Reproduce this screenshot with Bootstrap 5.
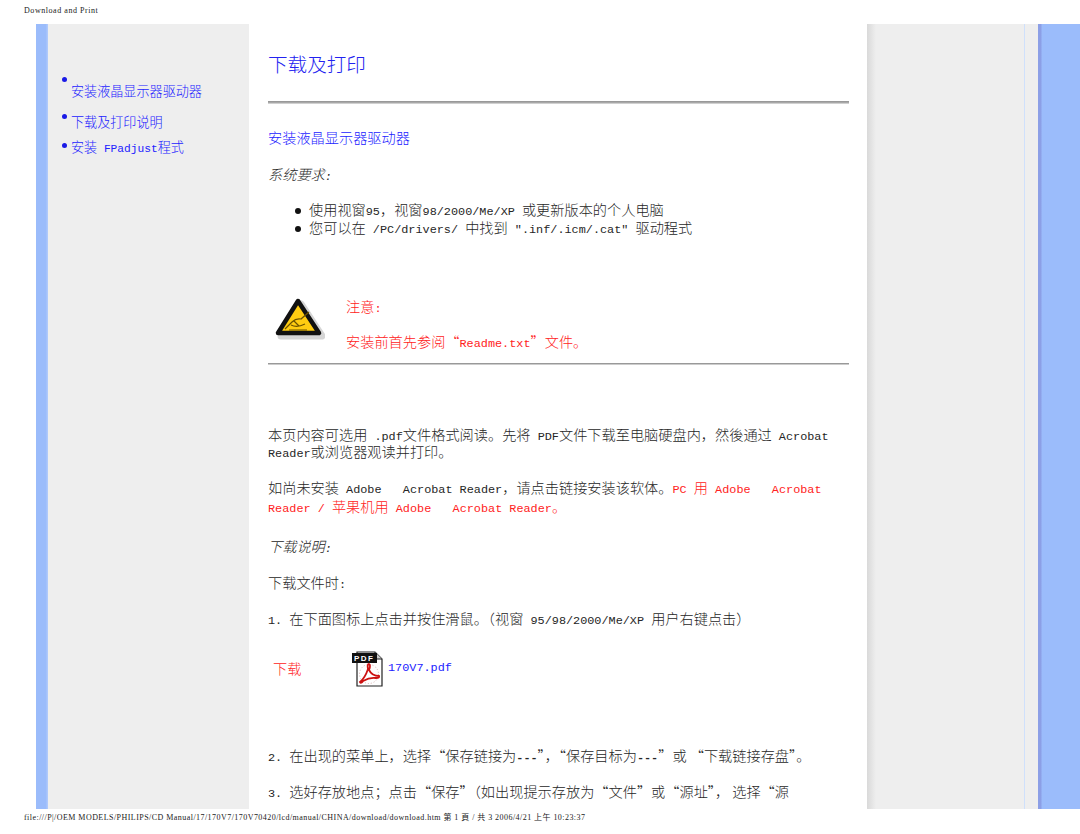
<!DOCTYPE html>
<html lang="zh-CN">
<head>
  <meta charset="UTF-8" />
  <title>Download and Print</title>
  <link href="https://cdn.jsdelivr.net/npm/bootstrap@5.3.3/dist/css/bootstrap.min.css" rel="stylesheet">
  <style>
    html, body { height: 834px; overflow: hidden; }
    body { margin: 0; background: #fff; color: #262626; font-family: "Noto Sans CJK SC", "Liberation Mono", monospace; font-size: 14.2px; line-height: 19px; font-weight: 300; }
    a { text-decoration: none; color: #2222ff; }
    .la { font-family: "Liberation Mono", monospace; font-size: 11.83px; line-height: 1; font-weight: 400; }
    .page-head { height: 24px; padding: 6px 0 0 24px; font: 8px/10px "Liberation Serif", serif; letter-spacing: .55px; color: #222; }
    .page-foot { height: 25px; padding: 4px 0 0 24px; font: 8px/10px "Liberation Serif", "Noto Sans CJK SC", serif; letter-spacing: .45px; color: #222; white-space: nowrap; }
    .shell { height: 785px; margin-left: 36px; overflow: hidden; }
    .strip-left { width: 12px; background: linear-gradient(to right, #9bbcfb 80%, #b4ccfb); }
    .side-nav { width: 201px; background: #eee; padding: 53px 0 0 14px; font-size: 13.1px; }
    .side-nav .la { font-size: 11.2px; }
    .side-nav ul { list-style: none; margin: 0; padding: 0; }
    .side-nav li { position: relative; padding-left: 9px; }
    .side-nav li::before { content: ""; position: absolute; left: 0; top: 0; width: 5px; height: 5px; border-radius: 50%; background: #1a1ae6; }
    .nav-one { padding-top: 4px; height: 35px; }
    .nav-two { height: 25px; }
    .nav-two::before { margin-top: 2px; }
    .nav-three::before { margin-top: 6px; }
    .main-col { width: 618px; background: #fff; padding: 0 18px 0 19px; }
    .page-title { font-size: 19.6px; line-height: 26px; color: #2222f0; margin: 27px 0 0; font-weight: 300; }
    .rule-thick { height: 3px; margin: 24px 0 24px; background: #a8a8a8; border-bottom: 1px solid #d0d0d0; border-top: 1px solid #999; opacity: 1; }
    .rule-thin { height: 2px; margin: 0; background: #999; border-bottom: 1px solid #ccc; opacity: 1; border-top: 0; }
    .note-red, .note-red a { color: #ff2222; }
    .req-list { list-style: none; margin: 17px 0 0; padding: 0 0 0 41px; line-height: 17px; }
    .req-list li { position: relative; }
    .req-list li::before { content: ""; position: absolute; left: -14px; top: 7px; width: 6px; height: 6px; border-radius: 50%; background: #111; }
    .req-title { margin-top: 18px; }
    .warn-row { margin-top: 59px; }
    .warn-icon { width: 78px; padding: 1px 0 0 5px; }
    .warn-text { line-height: 19px; padding-top: 1px; }
    .warn-rule { margin-top: 12px; }
    .tight-copy { line-height: 17px; margin-top: 61px; }
    .copy-two { margin-top: 17px; }
    .dl-row { height: 60px; margin-top: 22px; }
    .dl-row svg { margin-top: 1px; }
    .dl-label { width: 84px; padding: 9px 0 0 5px; }
    .dl-link { margin-top: 13px; }
    .gap-lg { margin-top: 36px; }
    .gap-md { margin-top: 17px; }
    .gap-it { margin-top: 21px; }
    .side-right { width: 171px; background: linear-gradient(to right, #d9d9d9, #eee 9px); position: relative; }
    .side-right::after { content: ""; position: absolute; top: 0; bottom: 0; left: 157px; width: 1px; background: #cfe0fb; }
    .strip-right { flex: 1; background: linear-gradient(to right, #8c9fe6 3px, #9bbcfb 4px); }
  </style>
</head>
<body>
  <div class="page-head">Download and Print</div>

  <div class="shell d-flex">
    <div class="strip-left"></div>

    <div class="side-nav">
      <ul>
        <li class="nav-one"><a href="#">安装液晶显示器驱动器</a></li>
        <li class="nav-two"><a href="#">下载及打印说明</a></li>
        <li class="nav-three"><a href="#">安装<span class="la"> FPadjust</span>程式</a></li>
      </ul>
    </div>

    <div class="main-col">
      <h1 class="page-title">下载及打印</h1>
      <hr class="rule-thick">
      <div><a href="#">安装液晶显示器驱动器</a></div>
      <div class="fst-italic req-title">系统要求<span class="la">:</span></div>
      <ul class="req-list">
        <li>使用视窗<span class="la">95</span>，视窗<span class="la">98/2000/Me/XP </span>或更新版本的个人电脑</li>
        <li>您可以在<span class="la"> /PC/drivers/ </span>中找到<span class="la"> ".inf/.icm/.cat" </span>驱动程式</li>
      </ul>

      <div class="warn-row d-flex">
        <div class="warn-icon">
          <svg width="52" height="44" viewBox="0 0 52 44">
            <path d="M26 5 L47 37 L6 37 Z" fill="#111" stroke="#888" stroke-width="7" stroke-linejoin="round" opacity=".35" transform="translate(2 2)"/>
            <path d="M25 4 L46 36 L5 36 Z" fill="#ffcc11" stroke="#111" stroke-width="4.5" stroke-linejoin="round"/>
            <path d="M12 32 L19 25 Q23 21 28 22 L36 15 M16 33 H34 M18 28 Q24 31 32 27 M21 24 L26 29" fill="none" stroke="#6b5200" stroke-width="1.2"/>
          </svg>
        </div>
        <div class="warn-text note-red">
          <div>注意<span class="la">:</span></div>
          <div class="mt-3">安装前首先参阅“<span class="la">Readme.txt</span>”文件。</div>
        </div>
      </div>
      <hr class="rule-thin warn-rule">

      <p class="tight-copy mb-0">本页内容可选用<span class="la"> .pdf</span>文件格式阅读。先将<span class="la"> PDF</span>文件下载至电脑硬盘内，然後通过<span class="la"> Acrobat Reader</span>或浏览器观读并打印。</p>
      <p class="copy-two mb-0">如尚未安装<span class="la"> Adobe &nbsp; Acrobat Reader</span>，请点击链接安装该软体。<span class="note-red"><span class="la">PC </span>用<span class="la"> Adobe &nbsp; Acrobat Reader / </span>苹果机用<span class="la"> Adobe &nbsp; Acrobat Reader</span>。</span></p>
      <div class="fst-italic gap-it">下载说明<span class="la">:</span></div>
      <div class="gap-md">下载文件时<span class="la">:</span></div>
      <div class="gap-md"><span class="la">1. </span>在下面图标上点击并按住滑鼠。（视窗<span class="la"> 95/98/2000/Me/XP </span>用户右键点击）</div>

      <div class="dl-row d-flex">
        <div class="dl-label note-red">下载</div>
        <svg width="32" height="36" viewBox="0 0 32 36">
          <path d="M5 1 H23 L30 8 V35 H5 Z" fill="#fff" stroke="#222" stroke-width="1.2"/>
          <path d="M23 1 V8 H30" fill="#ccc" stroke="#222" stroke-width="1"/>
          <circle cx="17" cy="23" r="9.5" fill="none" stroke="#c99" stroke-width=".8" stroke-dasharray="1 2"/>
          <rect x="0" y="2" width="25" height="10" fill="#111"/>
          <text x="2" y="10" font-family="Liberation Sans" font-size="8" font-weight="700" fill="#fff" letter-spacing="1.5">PDF</text>
          <path d="M8 31 Q13 27 16 18 Q15 13 17 13 Q19 14 17 19 Q20 25 27 25 Q28 27 24 27 Q18 26 11 30 Q9 33 8 31 Z" fill="none" stroke="#cc1111" stroke-width="1.8"/>
        </svg>
        <a class="la ms-1 dl-link" href="#">170V7.pdf</a>
      </div>

      <div class="gap-lg"><span class="la">2. </span>在出现的菜单上，选择“保存链接为<span class="la fw-bold">---</span>”，“保存目标为<span class="la fw-bold">---</span>”或 “下载链接存盘”。</div>
      <div class="gap-md"><span class="la">3. </span>选好存放地点；点击“保存”（如出现提示存放为“文件”或“源址”， 选择“源</div>
    </div>

    <div class="side-right"></div>
    <div class="strip-right"></div>
  </div>

  <div class="page-foot">file:///P|/OEM MODELS/PHILIPS/CD Manual/17/170V7/170V70420/lcd/manual/CHINA/download/download.htm 第 1 頁 / 共 3 2006/4/21 上午 10:23:37</div>
</body>
</html>
